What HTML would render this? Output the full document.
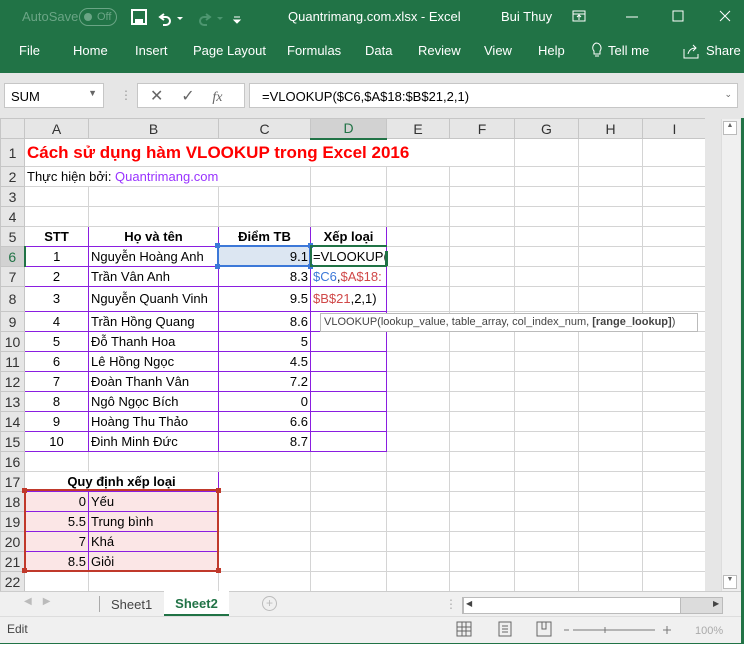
<!DOCTYPE html>
<html><head><meta charset="utf-8"><style>
*{margin:0;padding:0;box-sizing:border-box}
body{width:744px;height:648px;overflow:hidden;background:#fff;font-family:"Liberation Sans",sans-serif;position:relative}
.abs{position:absolute}
.g{background:#217346;color:#fff}
.t{position:absolute;font-size:13px;color:#fff;top:43px}
table{border-collapse:collapse;table-layout:fixed;position:absolute;left:0;top:118px;width:722px}
td{border:1px solid #d4d4d4;font-size:13px;white-space:nowrap;overflow:hidden;padding:0 2px;height:20px;line-height:18px;color:#000}
td.h{background:#e6e6e6;color:#333;text-align:center;border-color:#c6c6c6;font-size:14px;padding:0}
td.hs{background:#d2d2d2;color:#217346}
.p{border:1px solid #8a1ee0}
.c{text-align:center}.r{text-align:right}.b{font-weight:bold}
.pk{background:#fbe6e6}
</style></head><body>
<div class="abs g" style="left:0;top:0;width:744px;height:73px"></div>
<div class="abs" style="left:22px;top:9px;font-size:13px;color:#6aa585">AutoSave</div>
<div class="abs" style="left:79px;top:8px;width:38px;height:18px;border:1px solid #6aa585;border-radius:9px;font-size:11px;color:#6aa585;padding-left:17px;line-height:16px">Off<span style="position:absolute;left:4px;top:4px;width:8px;height:8px;border-radius:50%;background:#6aa585"></span></div>
<svg class="abs" style="left:130px;top:8px" width="120" height="20"><rect x="2" y="2" width="14" height="14" fill="none" stroke="#fff" stroke-width="2"/><rect x="5" y="11" width="8" height="5" fill="#fff"/><path d="M34 6 l-4 3 4 3 M30 9 h6 a4 4 0 0 1 0 8 h-3" stroke="#fff" stroke-width="2" fill="none"/><path d="M47 9 l3 3 3-3z" fill="#fff"/><path d="M76 6 l4 3 -4 3 M80 9 h-6 a4 4 0 0 0 0 8 h3" stroke="#4d9670" stroke-width="2" fill="none"/><path d="M87 9 l3 3 3-3z" fill="#4d9670"/><path d="M104 9h6M104 12l3 3 3-3z" stroke="#fff" fill="#fff"/></svg>
<div class="abs" style="left:288px;top:9px;font-size:13px;color:#fff">Quantrimang.com.xlsx - Excel</div>
<div class="abs" style="left:501px;top:9px;font-size:13px;color:#fff">Bui Thuy</div>
<svg class="abs" style="left:570px;top:8px" width="170" height="18"><rect x="3" y="3" width="12" height="10" fill="none" stroke="#fff"/><path d="M3 6h12M9 12V7M7 9l2-2 2 2" stroke="#fff" fill="none"/><path d="M56 9h12" stroke="#fff"/><rect x="103" y="3" width="10" height="10" fill="none" stroke="#fff"/><path d="M150 3l10 10M160 3l-10 10" stroke="#fff"/></svg>
<div class="t" style="left:19px">File</div><div class="t" style="left:73px">Home</div><div class="t" style="left:135px">Insert</div><div class="t" style="left:193px">Page Layout</div><div class="t" style="left:287px">Formulas</div><div class="t" style="left:365px">Data</div><div class="t" style="left:418px">Review</div><div class="t" style="left:484px">View</div><div class="t" style="left:538px">Help</div><div class="t" style="left:608px">Tell me</div><div class="t" style="left:706px">Share</div>
<svg class="abs" style="left:590px;top:42px" width="110" height="18"><path d="M6 1a5 5 0 0 1 4 8v3h-6v-3a5 5 0 0 1 2-8z M5 14h4" stroke="#fff" fill="none"/><path d="M94 7v9h14v-4 M98 12c1-4 4-6 8-6 M103 3l3 3-3 3" stroke="#fff" fill="none"/></svg>
<div class="abs" style="left:0;top:73px;width:744px;height:45px;background:#e6e6e6"></div>
<div class="abs" style="left:4px;top:83px;width:100px;height:25px;background:#fff;border:1px solid #c6c6c6;font-size:13px;padding:5px 6px">SUM<span style="position:absolute;right:6px;top:4px;font-size:9px;color:#666">▼</span></div>
<div class="abs" style="left:120px;top:88px;color:#999;font-size:12px">⋮</div>
<div class="abs" style="left:137px;top:83px;width:108px;height:25px;background:#fff;border:1px solid #c6c6c6;color:#666;font-size:16px;padding:2px 0 0 12px">✕&nbsp;&nbsp;&nbsp;&nbsp;✓&nbsp;&nbsp;&nbsp;&nbsp;<i style="font-family:'Liberation Serif';font-size:14px">fx</i></div>
<div class="abs" style="left:249px;top:83px;width:489px;height:25px;background:#fff;border:1px solid #c6c6c6;font-size:13px;padding:5px 12px">=VLOOKUP($C6,$A$18:$B$21,2,1)<span style="position:absolute;right:5px;top:5px;font-size:9px;color:#666">⌄</span></div>
<table>
<colgroup><col style="width:24px"><col style="width:64px"><col style="width:130px"><col style="width:92px"><col style="width:76px"><col style="width:63px"><col style="width:65px"><col style="width:64px"><col style="width:64px"><col style="width:64px"><col style="width:16px"></colgroup>
<tr><td class="h" style="background:#e6e6e6"></td><td class="h">A</td><td class="h">B</td><td class="h">C</td><td class="h hs" style="border-bottom:2px solid #217346">D</td><td class="h">E</td><td class="h">F</td><td class="h">G</td><td class="h">H</td><td class="h">I</td><td class="h" style="background:#e6e6e6;border:none"></td></tr>
<tr style="height:28px"><td class="h">1</td><td colspan="5" style="font-size:17px;font-weight:bold;color:#f00;overflow:visible;border-right-color:#fff">Cách sử dụng hàm VLOOKUP trong Excel 2016</td><td></td><td></td><td></td><td></td><td style="border:none;background:#e6e6e6"></td></tr>
<tr><td class="h">2</td><td colspan="3">Thực hiện bởi: <span style="color:#9933ff">Quantrimang.com</span></td><td></td><td></td><td></td><td></td><td></td><td></td><td style="border:none;background:#e6e6e6"></td></tr>
<tr><td class="h">3</td><td></td><td></td><td></td><td></td><td></td><td></td><td></td><td></td><td></td><td style="border:none;background:#e6e6e6"></td></tr>
<tr><td class="h">4</td><td></td><td></td><td></td><td></td><td></td><td></td><td></td><td></td><td></td><td style="border:none;background:#e6e6e6"></td></tr>
<tr><td class="h">5</td><td class="p c b">STT</td><td class="p c b">Họ và tên</td><td class="p c b">Điểm TB</td><td class="p c b">Xếp loại</td><td></td><td></td><td></td><td></td><td></td><td style="border:none;background:#e6e6e6"></td></tr>
<tr><td class="h hs" style="border-right:2px solid #217346">6</td><td class="p c">1</td><td class="p">Nguyễn Hoàng Anh</td><td class="p r" style="background:#dce6f2">9.1</td><td class="p" style="overflow:visible">=VLOOKUP(</td><td></td><td></td><td></td><td></td><td></td><td style="border:none;background:#e6e6e6"></td></tr>
<tr><td class="h">7</td><td class="p c">2</td><td class="p">Trần Vân Anh</td><td class="p r">8.3</td><td class="p"><span style="color:#3c78d8">$C6</span>,<span style="color:#d04848">$A$18:</span></td><td></td><td></td><td></td><td></td><td></td><td style="border:none;background:#e6e6e6"></td></tr>
<tr style="height:25px"><td class="h">8</td><td class="p c">3</td><td class="p">Nguyễn Quanh Vinh</td><td class="p r">9.5</td><td class="p"><span style="color:#d04848">$B$21</span>,2,1)</td><td></td><td></td><td></td><td></td><td></td><td style="border:none;background:#e6e6e6"></td></tr>
<tr><td class="h">9</td><td class="p c">4</td><td class="p">Trần Hồng Quang</td><td class="p r">8.6</td><td class="p"></td><td></td><td></td><td></td><td></td><td></td><td style="border:none;background:#e6e6e6"></td></tr>
<tr><td class="h">10</td><td class="p c">5</td><td class="p">Đỗ Thanh Hoa</td><td class="p r">5</td><td class="p"></td><td></td><td></td><td></td><td></td><td></td><td style="border:none;background:#e6e6e6"></td></tr>
<tr><td class="h">11</td><td class="p c">6</td><td class="p">Lê Hồng Ngọc</td><td class="p r">4.5</td><td class="p"></td><td></td><td></td><td></td><td></td><td></td><td style="border:none;background:#e6e6e6"></td></tr>
<tr><td class="h">12</td><td class="p c">7</td><td class="p">Đoàn Thanh Vân</td><td class="p r">7.2</td><td class="p"></td><td></td><td></td><td></td><td></td><td></td><td style="border:none;background:#e6e6e6"></td></tr>
<tr><td class="h">13</td><td class="p c">8</td><td class="p">Ngô Ngọc Bích</td><td class="p r">0</td><td class="p"></td><td></td><td></td><td></td><td></td><td></td><td style="border:none;background:#e6e6e6"></td></tr>
<tr><td class="h">14</td><td class="p c">9</td><td class="p">Hoàng Thu Thảo</td><td class="p r">6.6</td><td class="p"></td><td></td><td></td><td></td><td></td><td></td><td style="border:none;background:#e6e6e6"></td></tr>
<tr><td class="h">15</td><td class="p c">10</td><td class="p">Đinh Minh Đức</td><td class="p r">8.7</td><td class="p"></td><td></td><td></td><td></td><td></td><td></td><td style="border:none;background:#e6e6e6"></td></tr>
<tr><td class="h">16</td><td></td><td></td><td></td><td></td><td></td><td></td><td></td><td></td><td></td><td style="border:none;background:#e6e6e6"></td></tr>
<tr><td class="h">17</td><td colspan="2" class="p c b">Quy định xếp loại</td><td></td><td></td><td></td><td></td><td></td><td></td><td></td><td style="border:none;background:#e6e6e6"></td></tr>
<tr><td class="h">18</td><td class="p r pk">0</td><td class="p pk">Yếu</td><td></td><td></td><td></td><td></td><td></td><td></td><td></td><td style="border:none;background:#e6e6e6"></td></tr>
<tr><td class="h">19</td><td class="p r pk">5.5</td><td class="p pk">Trung bình</td><td></td><td></td><td></td><td></td><td></td><td></td><td></td><td style="border:none;background:#e6e6e6"></td></tr>
<tr><td class="h">20</td><td class="p r pk">7</td><td class="p pk">Khá</td><td></td><td></td><td></td><td></td><td></td><td></td><td></td><td style="border:none;background:#e6e6e6"></td></tr>
<tr><td class="h">21</td><td class="p r pk">8.5</td><td class="p pk">Giỏi</td><td></td><td></td><td></td><td></td><td></td><td></td><td></td><td style="border:none;background:#e6e6e6"></td></tr>
<tr><td class="h">22</td><td></td><td></td><td></td><td></td><td></td><td></td><td></td><td></td><td></td><td style="border:none;background:#e6e6e6"></td></tr>
</table>
<!-- selections -->
<div class="abs" style="left:217px;top:245px;width:94px;height:22px;border:2px solid #3c78d8"></div>
<div class="abs" style="left:215px;top:243px;width:5px;height:5px;background:#3c78d8"></div><div class="abs" style="left:308px;top:243px;width:5px;height:5px;background:#3c78d8"></div><div class="abs" style="left:215px;top:264px;width:5px;height:5px;background:#3c78d8"></div><div class="abs" style="left:308px;top:264px;width:5px;height:5px;background:#3c78d8"></div>
<div class="abs" style="left:310px;top:245px;width:77px;height:22px;border:2px solid #217346;border-right:none"></div>
<div class="abs" style="left:385px;top:251px;width:3px;height:15px;background:#217346"></div>
<div class="abs" style="left:24px;top:489px;width:195px;height:83px;border:2px solid #c0392b"></div>
<div class="abs" style="left:22px;top:488px;width:5px;height:5px;background:#c0392b"></div><div class="abs" style="left:216px;top:488px;width:5px;height:5px;background:#c0392b"></div><div class="abs" style="left:22px;top:568px;width:5px;height:5px;background:#c0392b"></div><div class="abs" style="left:216px;top:568px;width:5px;height:5px;background:#c0392b"></div>
<div class="abs" style="left:320px;top:313px;width:378px;height:19px;background:#fff;border:1px solid #bbb;font-size:11px;color:#444;padding:2px 3px;white-space:nowrap;overflow:hidden">VLOOKUP(lookup_value, table_array, col_index_num, <b>[range_lookup]</b>)</div>
<!-- right scrollbar -->
<div class="abs" style="left:705px;top:118px;width:39px;height:473px;background:#e6e6e6"></div>
<div class="abs" style="left:721px;top:119px;width:19px;height:472px;background:#f0f0f0;border-left:1px solid #ddd"></div>
<div class="abs" style="left:723px;top:121px;width:14px;height:14px;background:#fff;border:1px solid #bbb;font-size:7px;text-align:center;color:#666">▲</div>
<div class="abs" style="left:723px;top:575px;width:14px;height:14px;background:#fff;border:1px solid #bbb;font-size:7px;text-align:center;color:#666">▼</div>
<div class="abs" style="left:741px;top:118px;width:3px;height:530px;background:#217346"></div>
<!-- sheet tabs -->
<div class="abs" style="left:0;top:591px;width:741px;height:25px;background:#f0f0f0;border-top:1px solid #ccc"></div>
<div class="abs" style="left:24px;top:596px;font-size:10px;color:#bbb">◀&nbsp;&nbsp;&nbsp;&nbsp;▶</div>
<div class="abs" style="left:99px;top:596px;width:1px;height:16px;background:#aaa"></div>
<div class="abs" style="left:111px;top:597px;font-size:13px;color:#444">Sheet1</div>
<div class="abs" style="left:164px;top:591px;width:65px;height:25px;background:#fff;border-bottom:2px solid #217346;font-size:13px;color:#217346;font-weight:bold;text-align:center;padding-top:5px">Sheet2</div>
<div class="abs" style="left:262px;top:596px;width:15px;height:15px;border:1px solid #bbb;border-radius:50%;color:#bbb;font-size:12px;text-align:center;line-height:13px">+</div>
<div class="abs" style="left:445px;top:597px;color:#aaa;font-size:12px">⋮</div>
<div class="abs" style="left:462px;top:597px;width:261px;height:17px;background:#dcdcdc;border:1px solid #bbb"></div>
<div class="abs" style="left:463px;top:598px;width:218px;height:15px;background:#fff;border-left:1px solid #bbb;border-right:1px solid #bbb"></div>
<div class="abs" style="left:466px;top:599px;font-size:8px;color:#444">◀</div><div class="abs" style="left:713px;top:599px;font-size:8px;color:#444">▶</div>
<!-- status -->
<div class="abs" style="left:0;top:616px;width:741px;height:27px;background:#f0f0f0;border-top:1px solid #ddd"></div>
<div class="abs" style="left:7px;top:622px;font-size:12px;color:#444">Edit</div>
<svg class="abs" style="left:455px;top:619px" width="290" height="20"><g stroke="#666" fill="none"><rect x="2" y="3" width="14" height="14"/><path d="M7 3v14M11 3v14M2 8h14M2 12h14"/><rect x="44" y="3" width="12" height="14"/><path d="M47 7h6M47 10h6M47 13h6"/><rect x="82" y="3" width="14" height="14"/><path d="M87 3v7h4v-7"/></g><path d="M109 11h5M118 11h82M208 11h8M212 7v8M150 8v6" stroke="#777"/><text x="240" y="15" font-size="11" fill="#aaa" font-family="Liberation Sans">100%</text></svg>
<div class="abs" style="left:0;top:643px;width:744px;height:5px;background:#fff;border-top:1px solid #217346"></div>
</body></html>
